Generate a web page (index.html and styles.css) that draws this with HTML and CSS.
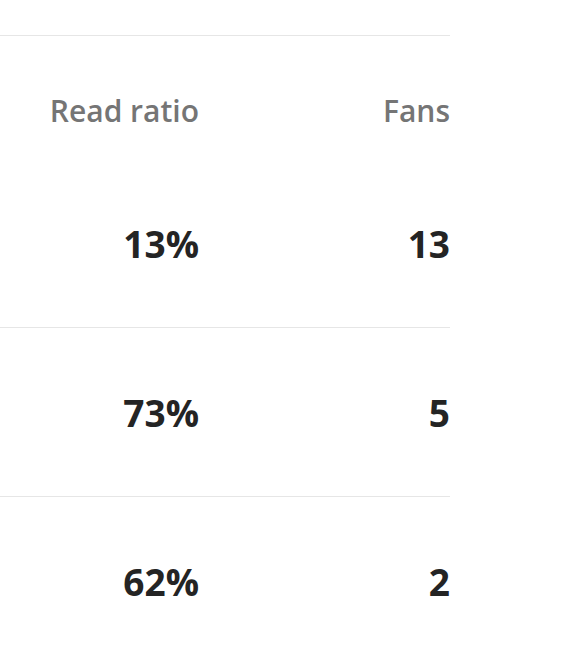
FILE: index.html
```html
<!DOCTYPE html>
<html>
<head>
<meta charset="utf-8">
<link rel="stylesheet" href="styles.css">
</head>
<body>
<div class="table">
  <div class="row head">
    <div class="cell">Read ratio</div>
    <div class="cell">Fans</div>
  </div>
  <div class="row data first">
    <div class="cell">13%</div>
    <div class="cell">13</div>
  </div>
  <div class="row data">
    <div class="cell">73%</div>
    <div class="cell">5</div>
  </div>
  <div class="row data">
    <div class="cell">62%</div>
    <div class="cell">2</div>
  </div>
</div>
</body>
</html>
```
FILE: styles.css
```css
html, body {
  margin: 0;
  padding: 0;
  background: #ffffff;
}
body {
  font-family: "Open Sans", "Noto Sans", sans-serif;
}
.table {
  width: 450px;
  padding-top: 35px;
}
.row {
  display: grid;
  grid-template-columns: 199px 251px;
  align-items: center;
  border-top: 1px solid #e6e6e6;
}
.cell {
  text-align: right;
}
.head {
  height: 124px;
  color: #757575;
  font-weight: 600;
  font-size: 30px;
  padding-top: 26px;
  box-sizing: border-box;
}
.data {
  height: 168px;
  color: #242424;
  font-weight: 700;
  font-size: 37px;
}
.data.first {
  border-top: none;
}
```
